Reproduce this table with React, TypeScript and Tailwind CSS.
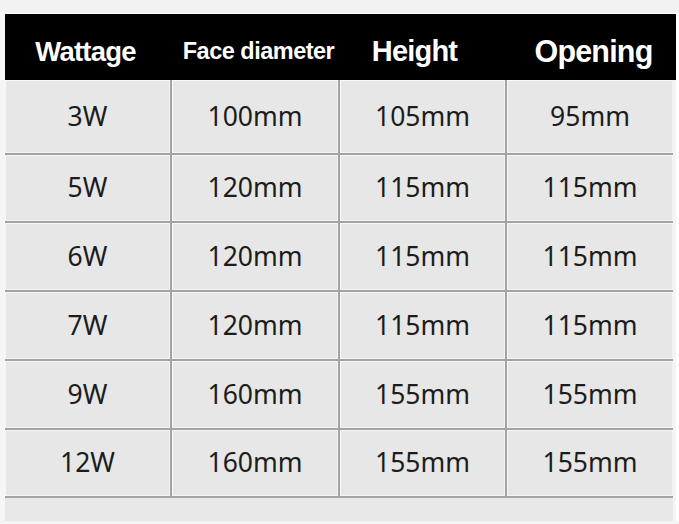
import React from "react";

const rows = [
  ["3W", "100mm", "105mm", "95mm"],
  ["5W", "120mm", "115mm", "115mm"],
  ["6W", "120mm", "115mm", "115mm"],
  ["7W", "120mm", "115mm", "115mm"],
  ["9W", "160mm", "155mm", "155mm"],
  ["12W", "160mm", "155mm", "155mm"],
];

const heights = ["h-[73px]", "h-[66px]", "h-[67px]", "h-[67px]", "h-[67px]", "h-[66px]"];

export default function App() {
  return (
    <div className="w-[679px] h-[524px] bg-[#f4f4f4] overflow-hidden" style={{ fontFamily: '"Liberation Sans", Arial, sans-serif' }}>
      <div className="h-[14px] w-full bg-[#f2f2f2] border-b border-white" />
      <div className="flex">
        <div className="w-[5px] bg-[#f6f6f6]" />
        <div className="flex flex-col">
          <div className="h-[66px] w-[671px] bg-black text-white font-bold grid grid-cols-[165px_168px_167px_171px] items-center pt-[10px]">
            <div className="text-center text-[27.5px] tracking-[-0.8px] pr-[4px]">Wattage</div>
            <div className="text-center text-[23.5px] tracking-[-0.5px] pl-[9px]">Face diameter</div>
            <div className="text-center text-[29px] tracking-[-0.8px] pr-[14px]">Height</div>
            <div className="text-center text-[30.5px] tracking-[-0.8px] pl-[6px]">Opening</div>
          </div>
          <div className="w-[668px] bg-[#a3a3a3] grid grid-cols-[165px_166px_165px_166px] gap-[2px] pb-[2px]" style={{ fontFamily: '"Noto Sans", "Open Sans", sans-serif' }}>
            {rows.map((r, i) =>
              r.map((c, j) => (
                <div
                  key={i + "-" + j}
                  className={`${heights[i]} bg-[#e7e7e7] flex items-center justify-center text-[26.5px] text-[#1c1c1c] shadow-[inset_1px_1px_0_#f7f7f7,inset_-1px_-1px_0_#f4f4f4]`}
                >
                  {c}
                </div>
              ))
            )}
          </div>
          <div className="h-[23px] w-[668px] bg-[#e8e8e8]" />
        </div>
        <div className="flex-1 bg-white" />
      </div>
    </div>
  );
}
